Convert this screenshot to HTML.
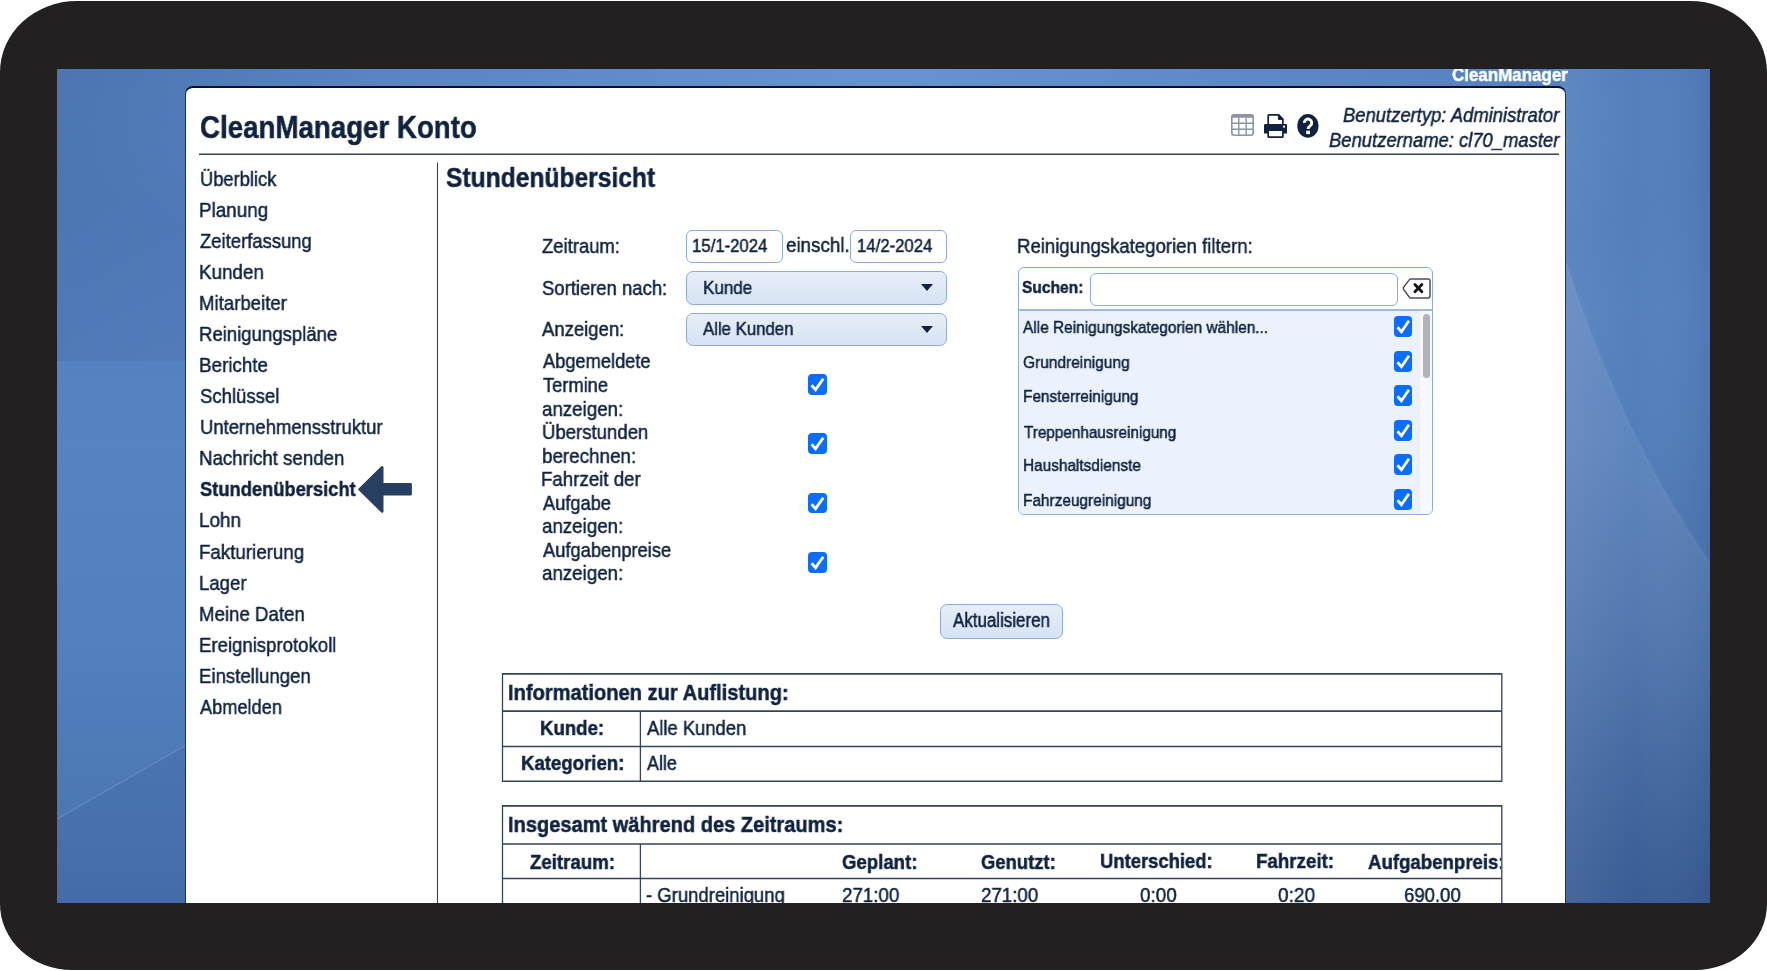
<!DOCTYPE html>
<html><head><meta charset="utf-8"><title>CleanManager Konto - Stundenübersicht</title>
<style>
html,body{margin:0;padding:0;width:1767px;height:971px;overflow:hidden;background:#fff;}
body{font-family:"Liberation Sans",sans-serif;color:#10223f;position:relative;}
.frame{position:absolute;left:0;top:1px;width:1767px;height:969px;background:#222021;border-radius:77px 77px 72px 72px / 71px 71px 66px 66px;}
.bg{position:absolute;left:57px;top:69px;width:1653px;height:834px;overflow:hidden;
 background:radial-gradient(ellipse 700px 600px at 100% 100%,rgba(25,45,95,0.35),rgba(25,45,95,0) 100%),linear-gradient(180deg,#4f7ab7 0%,#5784c1 45%,#5280bc 70%,#4872ae 100%);}
.bg .glow{position:absolute;left:0;top:0;width:100%;height:100%;
 background:radial-gradient(ellipse 900px 260px at 50% 0%,rgba(120,170,230,0.55),rgba(120,170,230,0) 100%);}
.panel{position:absolute;left:127px;top:17px;width:1381px;height:900px;background:#fff;
 border-top:2px solid #03102a;border-left:1px solid #24324c;border-right:1px solid #24324c;border-radius:8px 8px 0 0;box-sizing:border-box;}
.abs{position:absolute;}
.t{position:absolute;white-space:pre;transform-origin:0 0;will-change:transform;-webkit-text-stroke:0.5px currentColor;font-family:"Liberation Sans",sans-serif;}
.hline{position:absolute;background:#3e4c64;}
.inp{position:absolute;box-sizing:border-box;border:1px solid #8eaad9;border-radius:6px;background:#fff;}
.sel{position:absolute;box-sizing:border-box;border:1px solid #8eaad9;border-radius:7px;background:linear-gradient(180deg,#e7eef8,#d6e3f3);}
.tri{position:absolute;width:0;height:0;border-left:6px solid transparent;border-right:6px solid transparent;border-top:7px solid #10223f;}
.cb{position:absolute;width:19px;height:21px;box-sizing:border-box;border-radius:4px;background:#0a6dfe;}
.cb svg{position:absolute;left:0;top:0;width:19px;height:21px;}
</style></head><body>
<div class="frame"></div>
<div class="bg"><div class="glow"></div>
<svg class="abs" style="left:0;top:0" width="1653" height="834" viewBox="57 69 1653 834">
 <defs>
  <linearGradient id="lg1" x1="0" y1="0" x2="0" y2="1"><stop offset="0" stop-color="#fff" stop-opacity="0.09"/><stop offset="0.55" stop-color="#fff" stop-opacity="0.06"/><stop offset="1" stop-color="#fff" stop-opacity="0"/></linearGradient>
  <linearGradient id="lg2" x1="0" y1="0" x2="1" y2="0"><stop offset="0" stop-color="#fff" stop-opacity="0.06"/><stop offset="0.5" stop-color="#fff" stop-opacity="0"/><stop offset="1" stop-color="#142a5a" stop-opacity="0.08"/></linearGradient>
  <linearGradient id="lg3" gradientUnits="userSpaceOnUse" x1="57" y1="0" x2="400" y2="0"><stop offset="0" stop-color="#19306a" stop-opacity="0.09"/><stop offset="0.37" stop-color="#19306a" stop-opacity="0.07"/><stop offset="1" stop-color="#19306a" stop-opacity="0"/></linearGradient>
  <filter id="bl" x="-10%" y="-10%" width="120%" height="120%"><feGaussianBlur stdDeviation="1.2"/></filter>
 </defs>
 <path d="M57 69H400V361H57Z" fill="url(#lg3)"/>
 <path d="M1560 69H1710V903H1560Z" fill="url(#lg2)"/>
 <path d="M57 819L1200 164L1200 903L57 903Z" fill="rgba(30,60,120,0.09)"/>
 <path d="M57 819L1200 164" stroke="rgba(150,190,240,0.3)" stroke-width="1.2" fill="none"/>
 <path d="M1550 210Q1612 425 1712 566V903H1550Z" fill="url(#lg1)"/>
 <path d="M1550 210Q1612 425 1712 566" stroke="rgba(170,205,245,0.07)" stroke-width="3" fill="none" filter="url(#bl)"/>
</svg>
</div>
<!-- panel in page coords -->
<div class="abs" style="left:57px;top:69px;width:1653px;height:834px;overflow:hidden;">
  <div class="panel" style="left:127.5px;"></div>
</div>
<div class="abs" style="left:0;top:0;width:1767px;height:971px;clip-path:inset(69px 57px 68px 57px);">
<!-- header underline -->
<!-- vertical separator -->
<svg class="abs" style="left:0;top:0" width="1767" height="971" viewBox="0 0 1767 971">
 <g stroke="#34435c" fill="none">
  <path d="M199 154.2H1559" stroke-width="1.5"/>
  <path d="M437.5 162.6V971" stroke-width="1.1"/>
  <path d="M502.5 673.9H1501.8M502.5 711.1H1501.8M502.5 746.5H1501.8M502.5 781.3H1501.8" stroke-width="1.6"/>
  <path d="M502.5 673.1V782.1M1501.8 673.1V782.1M640.4 711.1V781.3" stroke-width="1.3"/>
  <path d="M502.5 805.9H1501.8M502.5 844H1501.8M502.5 878.5H1501.8" stroke-width="1.6"/>
  <path d="M502.5 805.1V971M1501.8 805.1V971M640.4 844V971" stroke-width="1.3"/>
 </g>
</svg>
<!-- icons -->
<svg class="abs" style="left:1231px;top:114px;width:23px;height:22px" viewBox="0 0 23 22">
 <rect x="0.8" y="0.8" width="21.4" height="20.4" rx="2.5" fill="none" stroke="#8a94a3" stroke-width="1.6"/>
 <rect x="0.8" y="0.8" width="21.4" height="3" fill="#8a94a3"/>
 <path d="M0.8 9.2H22.2M0.8 15.2H22.2M7.8 3.5V21.2M15.2 3.5V21.2" stroke="#8a94a3" stroke-width="1.4" fill="none"/>
</svg>
<svg class="abs" style="left:1264px;top:114px;width:23px;height:24px" viewBox="0 0 23 24">
 <path d="M4.2 10V1.6Q4.2 0.8 5 0.8H14.6L18.9 5.2V10" fill="none" stroke="#10223f" stroke-width="1.7"/>
 <path d="M14.4 0.8V5.4H19" fill="#10223f" stroke="#10223f" stroke-width="1"/>
 <path d="M0 11.2Q0 10 1.4 10H21.6Q23 10 23 11.2V19.5H0Z" fill="#10223f"/>
 <circle cx="20" cy="12.7" r="1.1" fill="#fff"/>
 <path d="M4.2 17V22.4Q4.2 23.2 5 23.2H18.1Q18.9 23.2 18.9 22.4V17" fill="#fff" stroke="#10223f" stroke-width="1.7"/>
</svg>
<svg class="abs" style="left:1297px;top:114px;width:22px;height:24px" viewBox="0 0 22 24">
 <ellipse cx="10.9" cy="11.9" rx="10.6" ry="11.8" fill="#10223f"/>
 <path d="M7.3 8.9A3.7 3.7 0 1 1 13.3 11.7Q11.1 12.9 11.1 15" fill="none" stroke="#fff" stroke-width="2.9"/>
 <rect x="9.2" y="16.7" width="3.8" height="3.4" fill="#fff"/>
</svg>
<!-- nav arrow -->
<svg class="abs" style="left:357px;top:465px;width:56px;height:49px" viewBox="0 0 56 49">
 <path d="M2.6 24.4L25.2 2.3V19.4H53.6V29.3H25.2V46.5Z" fill="#273f60" stroke="#273f60" stroke-width="2.6" stroke-linejoin="round"/>
</svg>
<!-- form inputs -->
<div class="inp" style="left:686px;top:230px;width:97px;height:33px;"></div>
<div class="inp" style="left:850px;top:230px;width:97px;height:33px;"></div>
<div class="sel" style="left:686px;top:271px;width:261px;height:33.5px;"></div>
<div class="tri" style="left:921px;top:284px;"></div>
<div class="sel" style="left:686px;top:312.5px;width:261px;height:33.5px;"></div>
<div class="tri" style="left:921px;top:325.5px;"></div>
<!-- filter box -->
<div class="abs" style="left:1017.5px;top:267px;width:415px;height:247.5px;box-sizing:border-box;border:1px solid #8eaad9;border-radius:6px;overflow:hidden;background:#fff;">
  <div class="abs" style="left:0;top:41.3px;width:413px;height:2px;background:#9fb8e0;"></div>
  <div class="abs" style="left:0;top:43.3px;width:400px;height:204px;background:#ebf2fd;"></div>
  <div class="abs" style="left:400px;top:43.3px;width:13px;height:204px;background:#f7f8fa;box-shadow:inset 1px 0 0 #eef0f3;"></div>
  <div class="abs" style="left:404.5px;top:45.5px;width:6.5px;height:64px;background:#b3b4b7;border-radius:4px;"></div>
</div>
<div class="inp" style="left:1089.5px;top:272.5px;width:308px;height:33px;"></div>
<svg class="abs" style="left:1402px;top:277px;width:30px;height:23px" viewBox="0 0 30 23">
 <path d="M1.4 11.2Q1.2 10.8 1.6 10.3L7.4 2.6Q7.9 1.9 8.7 1.9H26.2Q28 1.9 28 3.7V19.1Q28 20.9 26.2 20.9H8.7Q7.9 20.9 7.4 20.2L1.6 12.4Q1.2 11.8 1.4 11.2Z" fill="none" stroke="#4a4f57" stroke-width="1.5" stroke-linejoin="round"/>
 <path d="M12.9 7.6L19.9 14.8M19.9 7.6L12.9 14.8" stroke="#111418" stroke-width="2.8" stroke-linecap="round"/>
</svg>
<div class="cb" style="left:808.2px;top:374.4px;width:18.7px;height:20.7px"><svg viewBox="0 0 19 21" preserveAspectRatio="none" style="width:18.7px;height:20.7px"><path d="M3.6 11.4L7.7 15.9L15.5 4.8" fill="none" stroke="#fff" stroke-width="2.9" stroke-linejoin="miter"/></svg></div>
<div class="cb" style="left:808.2px;top:433.4px;width:18.7px;height:20.7px"><svg viewBox="0 0 19 21" preserveAspectRatio="none" style="width:18.7px;height:20.7px"><path d="M3.6 11.4L7.7 15.9L15.5 4.8" fill="none" stroke="#fff" stroke-width="2.9" stroke-linejoin="miter"/></svg></div>
<div class="cb" style="left:808.2px;top:492.59999999999997px;width:18.7px;height:20.7px"><svg viewBox="0 0 19 21" preserveAspectRatio="none" style="width:18.7px;height:20.7px"><path d="M3.6 11.4L7.7 15.9L15.5 4.8" fill="none" stroke="#fff" stroke-width="2.9" stroke-linejoin="miter"/></svg></div>
<div class="cb" style="left:808.2px;top:551.9px;width:18.7px;height:20.7px"><svg viewBox="0 0 19 21" preserveAspectRatio="none" style="width:18.7px;height:20.7px"><path d="M3.6 11.4L7.7 15.9L15.5 4.8" fill="none" stroke="#fff" stroke-width="2.9" stroke-linejoin="miter"/></svg></div>
<div class="cb" style="left:1394.2px;top:316.3px;width:18.3px;height:20.8px"><svg viewBox="0 0 19 21" preserveAspectRatio="none" style="width:18.3px;height:20.8px"><path d="M3.6 11.4L7.7 15.9L15.5 4.8" fill="none" stroke="#fff" stroke-width="2.9" stroke-linejoin="miter"/></svg></div>
<div class="cb" style="left:1394.2px;top:350.8px;width:18.3px;height:20.8px"><svg viewBox="0 0 19 21" preserveAspectRatio="none" style="width:18.3px;height:20.8px"><path d="M3.6 11.4L7.7 15.9L15.5 4.8" fill="none" stroke="#fff" stroke-width="2.9" stroke-linejoin="miter"/></svg></div>
<div class="cb" style="left:1394.2px;top:385.3px;width:18.3px;height:20.8px"><svg viewBox="0 0 19 21" preserveAspectRatio="none" style="width:18.3px;height:20.8px"><path d="M3.6 11.4L7.7 15.9L15.5 4.8" fill="none" stroke="#fff" stroke-width="2.9" stroke-linejoin="miter"/></svg></div>
<div class="cb" style="left:1394.2px;top:419.8px;width:18.3px;height:20.8px"><svg viewBox="0 0 19 21" preserveAspectRatio="none" style="width:18.3px;height:20.8px"><path d="M3.6 11.4L7.7 15.9L15.5 4.8" fill="none" stroke="#fff" stroke-width="2.9" stroke-linejoin="miter"/></svg></div>
<div class="cb" style="left:1394.2px;top:454.3px;width:18.3px;height:20.8px"><svg viewBox="0 0 19 21" preserveAspectRatio="none" style="width:18.3px;height:20.8px"><path d="M3.6 11.4L7.7 15.9L15.5 4.8" fill="none" stroke="#fff" stroke-width="2.9" stroke-linejoin="miter"/></svg></div>
<div class="cb" style="left:1394.2px;top:488.8px;width:18.3px;height:20.8px"><svg viewBox="0 0 19 21" preserveAspectRatio="none" style="width:18.3px;height:20.8px"><path d="M3.6 11.4L7.7 15.9L15.5 4.8" fill="none" stroke="#fff" stroke-width="2.9" stroke-linejoin="miter"/></svg></div>
<!-- button -->
<div class="abs" style="left:939.8px;top:604.2px;width:123.2px;height:34.6px;box-sizing:border-box;border:1px solid #8eaad9;border-radius:7px;background:linear-gradient(180deg,#e6edf8,#d6e3f3);"></div>
<!-- table 1 -->
<!-- table 2 -->
<span class="t" style="left:199.61px;top:112.30px;font-size:31px;line-height:31px;font-weight:700;transform:scaleX(0.8929)">CleanManager Konto</span>
<span class="t" style="left:1451.51px;top:64.60px;font-size:19px;line-height:19px;font-weight:700;color:#ffffff;transform:scaleX(0.8915)">CleanManager</span>
<span class="t" style="left:1342.92px;top:103.90px;font-size:21px;line-height:21px;font-style:italic;transform:scaleX(0.8765)">Benutzertyp: Administrator</span>
<span class="t" style="left:1328.82px;top:128.70px;font-size:21px;line-height:21px;font-style:italic;transform:scaleX(0.8768)">Benutzername: cl70_master</span>
<span class="t" style="left:199.53px;top:167.80px;font-size:21px;line-height:21px;transform:scaleX(0.8724)">Überblick</span>
<span class="t" style="left:198.61px;top:198.86px;font-size:21px;line-height:21px;transform:scaleX(0.8973)">Planung</span>
<span class="t" style="left:200.40px;top:229.92px;font-size:21px;line-height:21px;transform:scaleX(0.8786)">Zeiterfassung</span>
<span class="t" style="left:198.61px;top:260.98px;font-size:21px;line-height:21px;transform:scaleX(0.8957)">Kunden</span>
<span class="t" style="left:198.63px;top:292.04px;font-size:21px;line-height:21px;transform:scaleX(0.8856)">Mitarbeiter</span>
<span class="t" style="left:198.63px;top:323.10px;font-size:21px;line-height:21px;transform:scaleX(0.8838)">Reinigungspläne</span>
<span class="t" style="left:198.61px;top:354.16px;font-size:21px;line-height:21px;transform:scaleX(0.8959)">Berichte</span>
<span class="t" style="left:199.52px;top:385.22px;font-size:21px;line-height:21px;transform:scaleX(0.8830)">Schlüssel</span>
<span class="t" style="left:199.52px;top:416.28px;font-size:21px;line-height:21px;transform:scaleX(0.8787)">Unternehmensstruktur</span>
<span class="t" style="left:198.62px;top:447.34px;font-size:21px;line-height:21px;transform:scaleX(0.8894)">Nachricht senden</span>
<span class="t" style="left:199.53px;top:478.40px;font-size:21px;line-height:21px;font-weight:700;transform:scaleX(0.8719)">Stundenübersicht</span>
<span class="t" style="left:198.60px;top:509.46px;font-size:21px;line-height:21px;transform:scaleX(0.9000)">Lohn</span>
<span class="t" style="left:198.62px;top:540.52px;font-size:21px;line-height:21px;transform:scaleX(0.8922)">Fakturierung</span>
<span class="t" style="left:198.63px;top:571.58px;font-size:21px;line-height:21px;transform:scaleX(0.8846)">Lager</span>
<span class="t" style="left:198.62px;top:602.64px;font-size:21px;line-height:21px;transform:scaleX(0.8879)">Meine Daten</span>
<span class="t" style="left:198.63px;top:633.70px;font-size:21px;line-height:21px;transform:scaleX(0.8849)">Ereignisprotokoll</span>
<span class="t" style="left:198.63px;top:664.76px;font-size:21px;line-height:21px;transform:scaleX(0.8862)">Einstellungen</span>
<span class="t" style="left:200.40px;top:695.82px;font-size:21px;line-height:21px;transform:scaleX(0.8660)">Abmelden</span>
<span class="t" style="left:445.69px;top:164.90px;font-size:27px;line-height:27px;font-weight:700;transform:scaleX(0.9114)">Stundenübersicht</span>
<span class="t" style="left:541.80px;top:235.10px;font-size:21px;line-height:21px;transform:scaleX(0.8793)">Zeitraum:</span>
<span class="t" style="left:541.52px;top:276.70px;font-size:21px;line-height:21px;transform:scaleX(0.8786)">Sortieren nach:</span>
<span class="t" style="left:541.80px;top:318.10px;font-size:21px;line-height:21px;transform:scaleX(0.8804)">Anzeigen:</span>
<span class="t" style="left:692.32px;top:236.30px;font-size:19px;line-height:19px;transform:scaleX(0.8810)">15/1-2024</span>
<span class="t" style="left:785.51px;top:234.30px;font-size:21px;line-height:21px;transform:scaleX(0.8941)">einschl.</span>
<span class="t" style="left:856.82px;top:236.30px;font-size:19px;line-height:19px;transform:scaleX(0.8810)">14/2-2024</span>
<span class="t" style="left:702.60px;top:277.50px;font-size:19px;line-height:19px;transform:scaleX(0.8962)">Kunde</span>
<span class="t" style="left:703.00px;top:318.70px;font-size:19px;line-height:19px;transform:scaleX(0.8824)">Alle Kunden</span>
<span class="t" style="left:543.10px;top:350.40px;font-size:21px;line-height:21px;transform:scaleX(0.8691)">Abgemeldete</span>
<span class="t" style="left:543.10px;top:373.95px;font-size:21px;line-height:21px;transform:scaleX(0.8703)">Termine</span>
<span class="t" style="left:542.21px;top:397.50px;font-size:21px;line-height:21px;transform:scaleX(0.8920)">anzeigen:</span>
<span class="t" style="left:542.22px;top:421.05px;font-size:21px;line-height:21px;transform:scaleX(0.8839)">Überstunden</span>
<span class="t" style="left:542.20px;top:444.60px;font-size:21px;line-height:21px;transform:scaleX(0.8961)">berechnen:</span>
<span class="t" style="left:541.32px;top:468.15px;font-size:21px;line-height:21px;transform:scaleX(0.8900)">Fahrzeit der</span>
<span class="t" style="left:543.10px;top:491.70px;font-size:21px;line-height:21px;transform:scaleX(0.8679)">Aufgabe</span>
<span class="t" style="left:542.21px;top:515.25px;font-size:21px;line-height:21px;transform:scaleX(0.8920)">anzeigen:</span>
<span class="t" style="left:543.10px;top:538.80px;font-size:21px;line-height:21px;transform:scaleX(0.8707)">Aufgabenpreise</span>
<span class="t" style="left:542.21px;top:562.35px;font-size:21px;line-height:21px;transform:scaleX(0.8920)">anzeigen:</span>
<span class="t" style="left:1017.43px;top:234.90px;font-size:21px;line-height:21px;transform:scaleX(0.8855)">Reinigungskategorien filtern:</span>
<span class="t" style="left:1021.69px;top:279.30px;font-size:17px;line-height:17px;font-weight:700;transform:scaleX(0.9138)">Suchen:</span>
<span class="t" style="left:1022.60px;top:318.60px;font-size:17px;line-height:17px;transform:scaleX(0.9071)">Alle Reinigungskategorien wählen...</span>
<span class="t" style="left:1022.99px;top:353.70px;font-size:17px;line-height:17px;transform:scaleX(0.9104)">Grundreinigung</span>
<span class="t" style="left:1023.00px;top:387.70px;font-size:17px;line-height:17px;transform:scaleX(0.9048)">Fensterreinigung</span>
<span class="t" style="left:1023.90px;top:423.70px;font-size:17px;line-height:17px;transform:scaleX(0.8982)">Treppenhausreinigung</span>
<span class="t" style="left:1023.00px;top:457.30px;font-size:17px;line-height:17px;transform:scaleX(0.9039)">Haushaltsdienste</span>
<span class="t" style="left:1022.99px;top:491.70px;font-size:17px;line-height:17px;transform:scaleX(0.9057)">Fahrzeugreinigung</span>
<span class="t" style="left:952.70px;top:610.80px;font-size:19.5px;line-height:19.5px;transform:scaleX(0.8685)">Aktualisieren</span>
<span class="t" style="left:507.61px;top:681.80px;font-size:22.5px;line-height:22.5px;font-weight:700;transform:scaleX(0.8932)">Informationen zur Auflistung:</span>
<span class="t" style="left:540.31px;top:717.00px;font-size:21px;line-height:21px;font-weight:700;transform:scaleX(0.8857)">Kunde:</span>
<span class="t" style="left:520.61px;top:752.20px;font-size:21px;line-height:21px;font-weight:700;transform:scaleX(0.8860)">Kategorien:</span>
<span class="t" style="left:646.50px;top:718.00px;font-size:20.5px;line-height:20.5px;transform:scaleX(0.8973)">Alle Kunden</span>
<span class="t" style="left:646.50px;top:753.20px;font-size:20.5px;line-height:20.5px;transform:scaleX(0.8735)">Alle</span>
<span class="t" style="left:507.61px;top:814.10px;font-size:22.5px;line-height:22.5px;font-weight:700;transform:scaleX(0.8912)">Insgesamt während des Zeitraums:</span>
<span class="t" style="left:529.50px;top:850.70px;font-size:21px;line-height:21px;font-weight:700;transform:scaleX(0.8883)">Zeitraum:</span>
<span class="t" style="left:841.71px;top:850.70px;font-size:21px;line-height:21px;font-weight:700;transform:scaleX(0.8855)">Geplant:</span>
<span class="t" style="left:980.52px;top:850.70px;font-size:21px;line-height:21px;font-weight:700;transform:scaleX(0.8771)">Genutzt:</span>
<span class="t" style="left:1100.02px;top:850.20px;font-size:21px;line-height:21px;font-weight:700;transform:scaleX(0.8778)">Unterschied:</span>
<span class="t" style="left:1255.61px;top:850.20px;font-size:21px;line-height:21px;font-weight:700;transform:scaleX(0.8918)">Fahrzeit:</span>
<div class="abs" style="left:0;top:0;width:1501.3px;height:971px;overflow:hidden"><span class="t" style="left:1367.81px;top:850.60px;font-size:21px;line-height:21px;font-weight:700;transform:scaleX(0.8869)">Aufgabenpreis:</span></div>
<span class="t" style="left:645.62px;top:884.00px;font-size:21px;line-height:21px;transform:scaleX(0.8808)">- Grundreinigung</span>
<span class="t" style="left:841.71px;top:884.00px;font-size:21px;line-height:21px;transform:scaleX(0.8937)">271:00</span>
<span class="t" style="left:980.51px;top:884.00px;font-size:21px;line-height:21px;transform:scaleX(0.8921)">271:00</span>
<span class="t" style="left:1139.90px;top:884.00px;font-size:21px;line-height:21px;transform:scaleX(0.8974)">0:00</span>
<span class="t" style="left:1277.59px;top:884.00px;font-size:21px;line-height:21px;transform:scaleX(0.9077)">0:20</span>
<span class="t" style="left:1403.62px;top:884.00px;font-size:21px;line-height:21px;transform:scaleX(0.8841)">690.00</span>
</div>
</body></html>
